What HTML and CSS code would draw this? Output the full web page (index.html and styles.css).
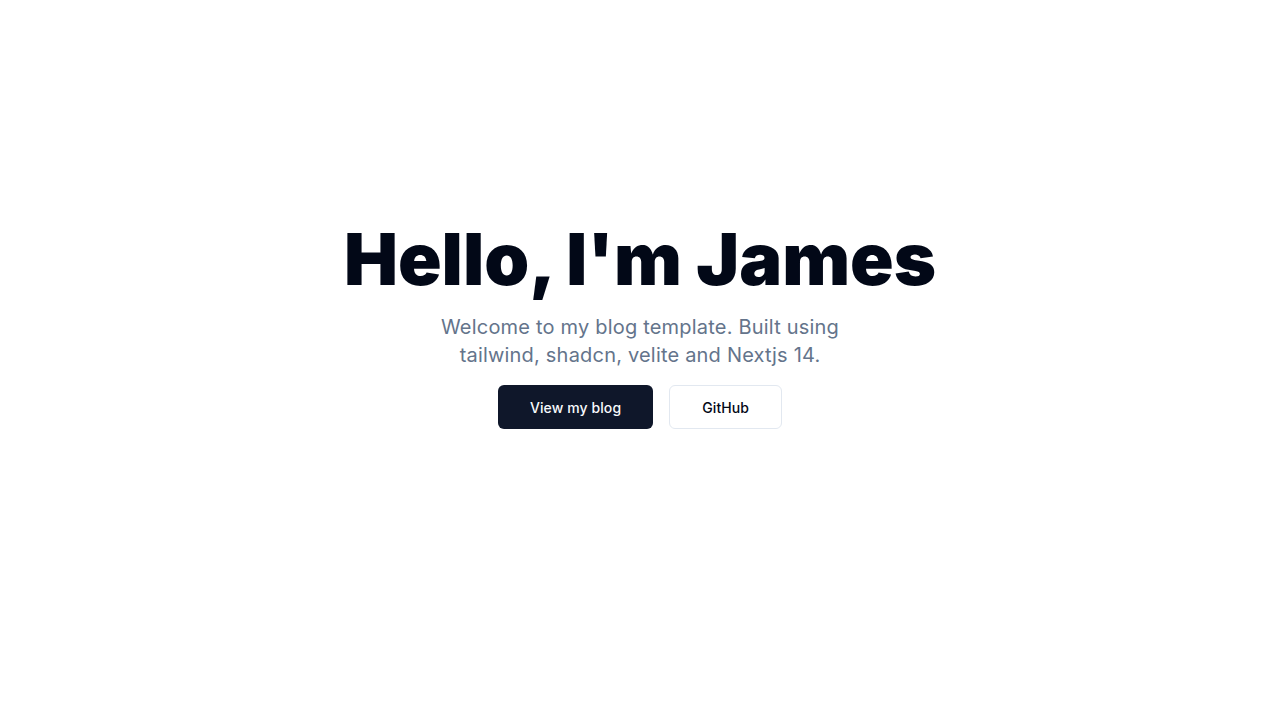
FILE: index.html
```html
<!DOCTYPE html>
<html lang="en">
<head>
<meta charset="utf-8">
<title>Hello, I'm James</title>
<link rel="stylesheet" href="styles.css">
</head>
<body>
<main class="hero">
  <h1 class="hero-title">Hello, I'm James</h1>
  <p class="hero-sub">Welcome to my blog template. Built using tailwind, shadcn, velite and Nextjs 14.</p>
  <div class="hero-actions">
    <a class="btn btn-primary" href="#">View my blog</a>
    <a class="btn btn-outline" href="#">GitHub</a>
  </div>
</main>
</body>
</html>
```

FILE: styles.css
```css
* { box-sizing: border-box; }
html, body { margin: 0; padding: 0; background: #ffffff; }
body {
  font-family: Inter, "Noto Sans", sans-serif;
  color: #020817;
  -webkit-font-smoothing: antialiased;
}
.hero {
  display: flex;
  flex-direction: column;
  align-items: center;
  text-align: center;
  gap: 16px;
  padding-top: 221px;
}
.hero-title {
  margin: 0;
  font-size: 72px;
  line-height: 76px;
  font-weight: 900;
  letter-spacing: 0;
  color: #020817;
}
.hero-sub {
  margin: 0;
  max-width: 420px;
  font-size: 20px;
  line-height: 28px;
  letter-spacing: 0.2px;
  color: #64748b;
}
.hero-actions {
  display: flex;
  gap: 16px;
  justify-content: center;
}
.btn {
  display: inline-flex;
  align-items: center;
  justify-content: center;
  height: 44px;
  padding: 0 32px;
  border-radius: 6px;
  font-size: 14px;
  font-weight: 500;
  letter-spacing: 0.1px;
  text-decoration: none;
}
.btn-primary {
  background: #0f172a;
  color: #f8fafc;
}
.btn-outline {
  background: #ffffff;
  color: #020817;
  border: 1px solid #e2e8f0;
}
```
